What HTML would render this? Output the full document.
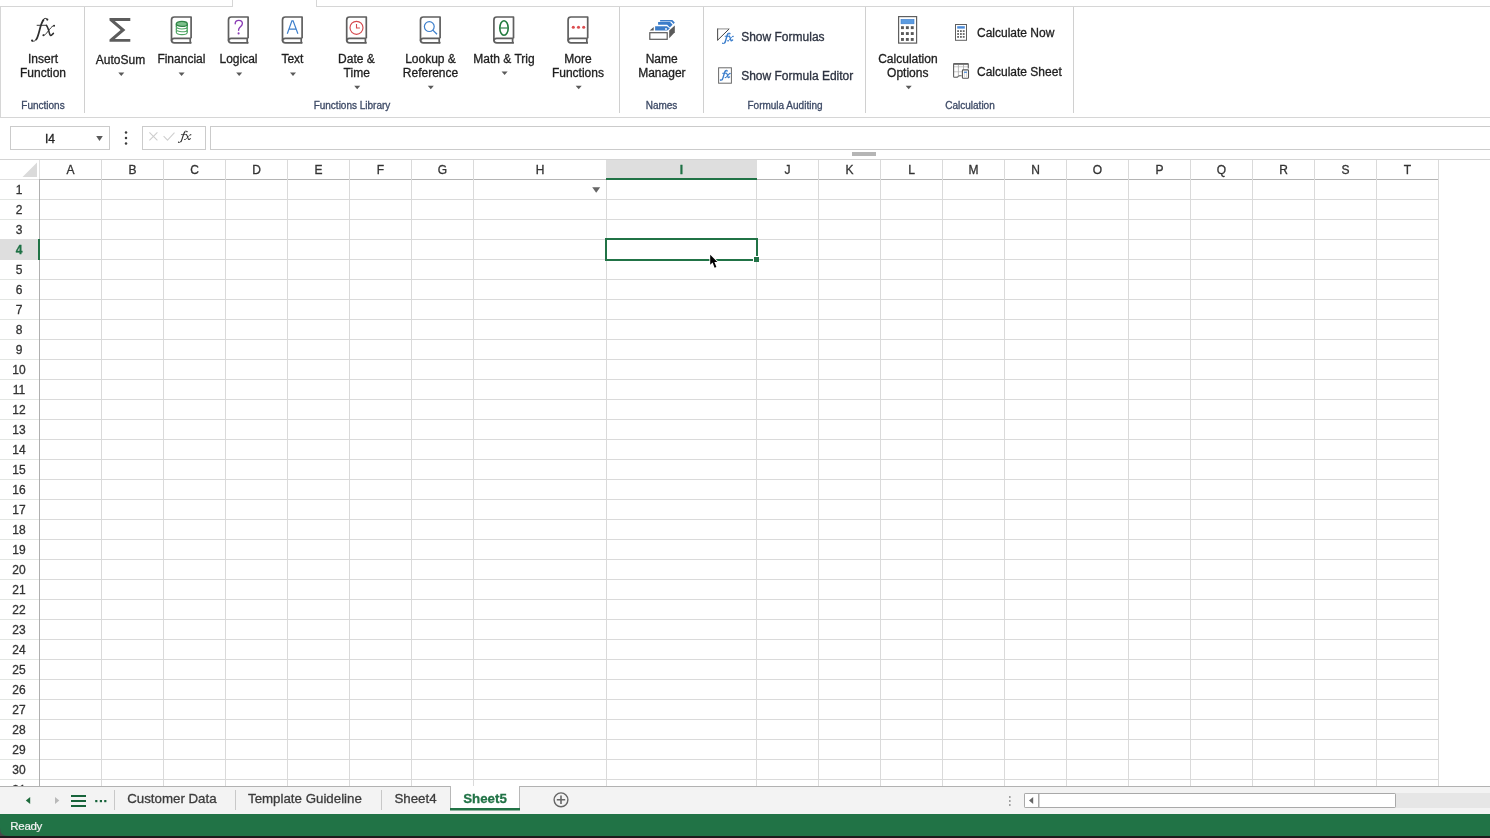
<!DOCTYPE html>
<html><head><meta charset="utf-8"><title>Excel</title>
<style>
html,body{margin:0;padding:0;width:1490px;height:838px;overflow:hidden;background:#fff;}
svg{display:block;font-family:"Liberation Sans",sans-serif;will-change:transform;}
</style></head><body>
<svg width="1490" height="838" viewBox="0 0 1490 838">
<rect x="0" y="0" width="1490" height="838" fill="#ffffff" />
<rect x="0" y="6" width="233" height="1" fill="#d6d6d6" />
<rect x="316" y="6" width="1174" height="1" fill="#d6d6d6" />
<rect x="232" y="0" width="1" height="7" fill="#d6d6d6" />
<rect x="316" y="0" width="1" height="7" fill="#d6d6d6" />
<rect x="0" y="6" width="1" height="112" fill="#d6d6d6" />
<rect x="0" y="117" width="1490" height="1" fill="#d6d6d6" />
<rect x="84" y="7" width="1" height="106" fill="#d0d0d0" />
<rect x="619" y="7" width="1" height="106" fill="#d0d0d0" />
<rect x="703" y="7" width="1" height="106" fill="#d0d0d0" />
<rect x="865" y="7" width="1" height="106" fill="#d0d0d0" />
<rect x="1073" y="7" width="1" height="106" fill="#d0d0d0" />
<text x="43" y="108.7" font-size="10" fill="#3d4a66" text-anchor="middle" font-weight="normal" stroke="#3d4a66" stroke-width="0.3" >Functions</text>
<text x="352" y="108.7" font-size="10" fill="#3d4a66" text-anchor="middle" font-weight="normal" stroke="#3d4a66" stroke-width="0.3" >Functions Library</text>
<text x="661.5" y="108.7" font-size="10" fill="#3d4a66" text-anchor="middle" font-weight="normal" stroke="#3d4a66" stroke-width="0.3" >Names</text>
<text x="785" y="108.7" font-size="10" fill="#3d4a66" text-anchor="middle" font-weight="normal" stroke="#3d4a66" stroke-width="0.3" >Formula Auditing</text>
<text x="970" y="108.9" font-size="10" fill="#3d4a66" text-anchor="middle" font-weight="normal" stroke="#3d4a66" stroke-width="0.3" >Calculation</text>
<g transform="translate(31,18) scale(1.0,1.0)" fill="none" stroke="#2e2e2e" stroke-linecap="round"><path d="M12.6,1.9 C10.6,4.2 9.6,8 8.6,12 C7.6,16 6.8,19.4 5.2,21.6" stroke-width="1.70"/><path d="M16.4,1.4 C15.8,0.3 14.2,0 13,0.8 C12.3,1.3 12,1.8 11.6,2.6 M5.6,21 C4.5,22.8 3,23.6 1.5,23.2 M6.1,7.3 H14.9" stroke-width="0.95"/><path d="M15.4,7.4 C16.8,8.8 17.5,12 18.5,15.5 C19,17.4 19.8,18 21,16.8 L22.4,15.4" stroke-width="1.53"/><path d="M23.3,7.5 C21.8,7.6 20.3,9 18.5,11.5 L15,15.8 C14.2,16.8 13.4,17.3 12.4,17.2" stroke-width="0.95"/><circle cx="16.3" cy="1.6" r="1.10" fill="#2e2e2e" stroke="none"/><circle cx="1.1" cy="22.6" r="1.10" fill="#2e2e2e" stroke="none"/><circle cx="23.1" cy="7.7" r="0.99" fill="#2e2e2e" stroke="none"/><circle cx="12.4" cy="17.2" r="0.99" fill="#2e2e2e" stroke="none"/></g>
<text x="43" y="62.6" font-size="12" fill="#1e1e1e" text-anchor="middle" font-weight="normal" stroke="#1e1e1e" stroke-width="0.3" >Insert</text>
<text x="43" y="76.6" font-size="12" fill="#1e1e1e" text-anchor="middle" font-weight="normal" stroke="#1e1e1e" stroke-width="0.3" >Function</text>
<path d="M109.5,18.1 H130.3 V21 H114.8 L125.4,30 L114.8,39 H130.3 V41.8 H109.5 V39.6 L120.6,30 L109.5,20.4 Z" fill="#5c5c5c"/>
<text x="120.5" y="63.5" font-size="12" fill="#1e1e1e" text-anchor="middle" font-weight="normal" stroke="#1e1e1e" stroke-width="0.3" >AutoSum</text>
<path d="M118.3,72.5 L124.3,72.5 L121.3,76.0 Z" fill="#5a5a5a"/>
<g transform="translate(170.6,16.0)" fill="none" stroke="#5f5f5f" stroke-width="1.7" stroke-linejoin="round"><path d="M20.5,22.3 V1 H3.8 Q0.9,1 0.9,3.9 V24 Q0.9,26.9 3.8,26.9 H20.7"/><path d="M0.9,24.8 Q0.9,22.3 3.6,22.3 H20.5"/><path d="M19.6,22.3 V25.6 Q19.6,26.6 20.7,26.9"/></g>
<g transform="translate(176,21)"><ellipse cx="5.8" cy="11.2" rx="5.5" ry="2.4" fill="#ffffff" stroke="#4ea463" stroke-width="1.05"/><path d="M0.3,8.4 V11.2 M11.3,8.4 V11.2" stroke="#4ea463" stroke-width="1.05"/><ellipse cx="5.8" cy="8.4" rx="5.5" ry="2.4" fill="#ffffff" stroke="#4ea463" stroke-width="1.05"/><path d="M0.3,5.6 V8.4 M11.3,5.6 V8.4" stroke="#4ea463" stroke-width="1.05"/><ellipse cx="5.8" cy="5.6" rx="5.5" ry="2.4" fill="#ffffff" stroke="#4ea463" stroke-width="1.05"/><path d="M0.3,2.8 V5.6 M11.3,2.8 V5.6" stroke="#3a9150" stroke-width="1.2"/><ellipse cx="5.8" cy="2.9" rx="5.5" ry="2.5" fill="#7cc08b" stroke="#2f8446" stroke-width="1.3"/></g>
<text x="181.4" y="62.6" font-size="12" fill="#1e1e1e" text-anchor="middle" font-weight="normal" stroke="#1e1e1e" stroke-width="0.3" >Financial</text>
<path d="M178.6,72.5 L184.6,72.5 L181.6,76.0 Z" fill="#5a5a5a"/>
<g transform="translate(227.6,16.0)" fill="none" stroke="#5f5f5f" stroke-width="1.7" stroke-linejoin="round"><path d="M20.5,22.3 V1 H3.8 Q0.9,1 0.9,3.9 V24 Q0.9,26.9 3.8,26.9 H20.7"/><path d="M0.9,24.8 Q0.9,22.3 3.6,22.3 H20.5"/><path d="M19.6,22.3 V25.6 Q19.6,26.6 20.7,26.9"/></g>
<path d="M235.2,23.8 C235.2,21.5 236.8,20.4 238.8,20.4 C241,20.4 242.4,21.7 242.4,23.6 C242.4,25.5 240.9,26.4 239.7,27.5 C238.9,28.3 238.6,29 238.6,30.2" fill="none" stroke="#8a3cb5" stroke-width="1.35" stroke-linecap="round"/><circle cx="238.6" cy="33.4" r="1.05" fill="#8a3cb5"/>
<text x="238.5" y="62.6" font-size="12" fill="#1e1e1e" text-anchor="middle" font-weight="normal" stroke="#1e1e1e" stroke-width="0.3" >Logical</text>
<path d="M236.2,72.5 L242.2,72.5 L239.2,76.0 Z" fill="#5a5a5a"/>
<g transform="translate(281.6,16.0)" fill="none" stroke="#5f5f5f" stroke-width="1.7" stroke-linejoin="round"><path d="M20.5,22.3 V1 H3.8 Q0.9,1 0.9,3.9 V24 Q0.9,26.9 3.8,26.9 H20.7"/><path d="M0.9,24.8 Q0.9,22.3 3.6,22.3 H20.5"/><path d="M19.6,22.3 V25.6 Q19.6,26.6 20.7,26.9"/></g>
<path d="M287.3,33.8 L291.9,20.8 H293.1 L297.9,33.8 M289.4,29.2 H295.8" fill="none" stroke="#3d7fcc" stroke-width="1.2"/>
<text x="292.4" y="62.6" font-size="12" fill="#1e1e1e" text-anchor="middle" font-weight="normal" stroke="#1e1e1e" stroke-width="0.3" >Text</text>
<path d="M290,72.5 L296,72.5 L293,76.0 Z" fill="#5a5a5a"/>
<g transform="translate(345.8,16.0)" fill="none" stroke="#5f5f5f" stroke-width="1.7" stroke-linejoin="round"><path d="M20.5,22.3 V1 H3.8 Q0.9,1 0.9,3.9 V24 Q0.9,26.9 3.8,26.9 H20.7"/><path d="M0.9,24.8 Q0.9,22.3 3.6,22.3 H20.5"/><path d="M19.6,22.3 V25.6 Q19.6,26.6 20.7,26.9"/></g>
<circle cx="356.5" cy="27.8" r="6.5" fill="none" stroke="#d64a4f" stroke-width="1.15"/><path d="M356.5,24 V28 H359.9" fill="none" stroke="#d64a4f" stroke-width="1.1"/>
<text x="356.4" y="62.6" font-size="12" fill="#1e1e1e" text-anchor="middle" font-weight="normal" stroke="#1e1e1e" stroke-width="0.3" >Date &amp;</text>
<text x="356.7" y="76.6" font-size="12" fill="#1e1e1e" text-anchor="middle" font-weight="normal" stroke="#1e1e1e" stroke-width="0.3" >Time</text>
<path d="M354.2,85.7 L360.2,85.7 L357.2,89.2 Z" fill="#5a5a5a"/>
<g transform="translate(419.6,16.0)" fill="none" stroke="#5f5f5f" stroke-width="1.7" stroke-linejoin="round"><path d="M20.5,22.3 V1 H3.8 Q0.9,1 0.9,3.9 V24 Q0.9,26.9 3.8,26.9 H20.7"/><path d="M0.9,24.8 Q0.9,22.3 3.6,22.3 H20.5"/><path d="M19.6,22.3 V25.6 Q19.6,26.6 20.7,26.9"/></g>
<circle cx="429.3" cy="26.6" r="4.9" fill="none" stroke="#3d7fcc" stroke-width="1.2"/><path d="M432.8,30.1 L437,34.3" fill="none" stroke="#3d7fcc" stroke-width="1.3"/>
<text x="430.5" y="62.6" font-size="12" fill="#1e1e1e" text-anchor="middle" font-weight="normal" stroke="#1e1e1e" stroke-width="0.3" >Lookup &amp;</text>
<text x="430.5" y="76.6" font-size="12" fill="#1e1e1e" text-anchor="middle" font-weight="normal" stroke="#1e1e1e" stroke-width="0.3" >Reference</text>
<path d="M427.8,85.7 L433.8,85.7 L430.8,89.2 Z" fill="#5a5a5a"/>
<g transform="translate(493,16.0)" fill="none" stroke="#5f5f5f" stroke-width="1.7" stroke-linejoin="round"><path d="M20.5,22.3 V1 H3.8 Q0.9,1 0.9,3.9 V24 Q0.9,26.9 3.8,26.9 H20.7"/><path d="M0.9,24.8 Q0.9,22.3 3.6,22.3 H20.5"/><path d="M19.6,22.3 V25.6 Q19.6,26.6 20.7,26.9"/></g>
<ellipse cx="504" cy="28" rx="4.2" ry="7.3" fill="none" stroke="#1f7a3c" stroke-width="1.6"/><path d="M500.2,28 H507.8" stroke="#1f7a3c" stroke-width="1.1"/>
<text x="504" y="62.6" font-size="12" fill="#1e1e1e" text-anchor="middle" font-weight="normal" stroke="#1e1e1e" stroke-width="0.3" >Math &amp; Trig</text>
<path d="M501.6,71.4 L507.6,71.4 L504.6,74.9 Z" fill="#5a5a5a"/>
<g transform="translate(567.2,16.0)" fill="none" stroke="#5f5f5f" stroke-width="1.7" stroke-linejoin="round"><path d="M20.5,22.3 V1 H3.8 Q0.9,1 0.9,3.9 V24 Q0.9,26.9 3.8,26.9 H20.7"/><path d="M0.9,24.8 Q0.9,22.3 3.6,22.3 H20.5"/><path d="M19.6,22.3 V25.6 Q19.6,26.6 20.7,26.9"/></g>
<circle cx="573.3" cy="27.3" r="1.55" fill="#dc4d50"/>
<circle cx="578.5" cy="27.3" r="1.55" fill="#dc4d50"/>
<circle cx="583.7" cy="27.3" r="1.55" fill="#dc4d50"/>
<text x="577.9" y="62.6" font-size="12" fill="#1e1e1e" text-anchor="middle" font-weight="normal" stroke="#1e1e1e" stroke-width="0.3" >More</text>
<text x="577.9" y="76.6" font-size="12" fill="#1e1e1e" text-anchor="middle" font-weight="normal" stroke="#1e1e1e" stroke-width="0.3" >Functions</text>
<path d="M575.7,85.7 L581.7,85.7 L578.7,89.2 Z" fill="#5a5a5a"/>
<g transform="translate(644,14)"><path d="M16.1,5.9 H28.3 L30.8,8.6 L29.6,9.9 L27.3,7.4 H16.1 Z" fill="#3a7cc9"/><path d="M14.1,8 H26.1 L28.6,10.7 L25.8,13.6 L23.2,10.8 H14.1 Z" fill="#3a7cc9"/><path d="M11.1,12.2 H22.9 L25.8,14.4 L23.3,16.6 H11.1 Z" fill="#3a7cc9"/><circle cx="22" cy="15" r="0.9" fill="#ffffff"/><path d="M5.7,16.6 L9.7,13.1 V16.6 Z" fill="#5a5a5a"/><path d="M25.2,16.5 L30.8,11.5 V18.3 L25.2,24.3 Z" fill="#5a5a5a"/><rect x="5.8" y="18.7" width="17.4" height="6.6" fill="#ffffff" stroke="#5a5a5a" stroke-width="1.2"/></g>
<text x="661.7" y="62.6" font-size="12" fill="#1e1e1e" text-anchor="middle" font-weight="normal" stroke="#1e1e1e" stroke-width="0.3" >Name</text>
<text x="661.9" y="76.6" font-size="12" fill="#1e1e1e" text-anchor="middle" font-weight="normal" stroke="#1e1e1e" stroke-width="0.3" >Manager</text>
<path d="M729.2,28.9 H717.6" fill="none" stroke="#999" stroke-width="1.1"/><path d="M717.6,28.5 V40.4" fill="none" stroke="#555" stroke-width="1.1"/><path d="M729.2,28.9 L717.6,40.2" fill="none" stroke="#444" stroke-width="1"/>
<g transform="translate(722.3,32.9) scale(0.46,0.46)" fill="none" stroke="#3d7fcc" stroke-linecap="round"><path d="M12.6,1.9 C10.6,4.2 9.6,8 8.6,12 C7.6,16 6.8,19.4 5.2,21.6" stroke-width="3.26"/><path d="M16.4,1.4 C15.8,0.3 14.2,0 13,0.8 C12.3,1.3 12,1.8 11.6,2.6 M5.6,21 C4.5,22.8 3,23.6 1.5,23.2 M6.1,7.3 H14.9" stroke-width="2.17"/><path d="M15.4,7.4 C16.8,8.8 17.5,12 18.5,15.5 C19,17.4 19.8,18 21,16.8 L22.4,15.4" stroke-width="2.93"/><path d="M23.3,7.5 C21.8,7.6 20.3,9 18.5,11.5 L15,15.8 C14.2,16.8 13.4,17.3 12.4,17.2" stroke-width="2.17"/><circle cx="16.3" cy="1.6" r="1.74" fill="#3d7fcc" stroke="none"/><circle cx="1.1" cy="22.6" r="1.74" fill="#3d7fcc" stroke="none"/><circle cx="23.1" cy="7.7" r="1.57" fill="#3d7fcc" stroke="none"/><circle cx="12.4" cy="17.2" r="1.57" fill="#3d7fcc" stroke="none"/></g>
<text x="741.2" y="40.6" font-size="12" fill="#2c3240" text-anchor="start" font-weight="normal" stroke="#2c3240" stroke-width="0.3" >Show Formulas</text>
<rect x="718.6" y="67.8" width="12.8" height="15.4" fill="#fff" stroke="#6a6a6a" stroke-width="1"/>
<g transform="translate(720.0,70.2) scale(0.43,0.43)" fill="none" stroke="#3d7fcc" stroke-linecap="round"><path d="M12.6,1.9 C10.6,4.2 9.6,8 8.6,12 C7.6,16 6.8,19.4 5.2,21.6" stroke-width="3.26"/><path d="M16.4,1.4 C15.8,0.3 14.2,0 13,0.8 C12.3,1.3 12,1.8 11.6,2.6 M5.6,21 C4.5,22.8 3,23.6 1.5,23.2 M6.1,7.3 H14.9" stroke-width="2.33"/><path d="M15.4,7.4 C16.8,8.8 17.5,12 18.5,15.5 C19,17.4 19.8,18 21,16.8 L22.4,15.4" stroke-width="2.93"/><path d="M23.3,7.5 C21.8,7.6 20.3,9 18.5,11.5 L15,15.8 C14.2,16.8 13.4,17.3 12.4,17.2" stroke-width="2.33"/><circle cx="16.3" cy="1.6" r="1.74" fill="#3d7fcc" stroke="none"/><circle cx="1.1" cy="22.6" r="1.74" fill="#3d7fcc" stroke="none"/><circle cx="23.1" cy="7.7" r="1.57" fill="#3d7fcc" stroke="none"/><circle cx="12.4" cy="17.2" r="1.57" fill="#3d7fcc" stroke="none"/></g>
<text x="741.2" y="79.5" font-size="12" fill="#2c3240" text-anchor="start" font-weight="normal" stroke="#2c3240" stroke-width="0.3" >Show Formula Editor</text>
<rect x="898.6" y="16.6" width="18" height="26.5" fill="#fff" stroke="#5f5f5f" stroke-width="1.2"/>
<rect x="901" y="19.4" width="13" height="4.4" fill="#5b9be0" stroke="#3d7fcc" stroke-width="0.6"/>
<rect x="901.0" y="26.2" width="2.9" height="2.9" fill="#5a5a5a"/>
<rect x="905.9" y="26.2" width="2.9" height="2.9" fill="#5a5a5a"/>
<rect x="910.8" y="26.2" width="2.9" height="2.9" fill="#5a5a5a"/>
<rect x="901.0" y="32.1" width="2.9" height="2.9" fill="#5a5a5a"/>
<rect x="905.9" y="32.1" width="2.9" height="2.9" fill="#5a5a5a"/>
<rect x="910.8" y="32.1" width="2.9" height="2.9" fill="#5a5a5a"/>
<rect x="901.0" y="38.0" width="2.9" height="2.9" fill="#5a5a5a"/>
<rect x="905.9" y="38.0" width="2.9" height="2.9" fill="#5a5a5a"/>
<rect x="910.8" y="38.0" width="2.9" height="2.9" fill="#5a5a5a"/>
<text x="907.9" y="62.9" font-size="12" fill="#1e1e1e" text-anchor="middle" font-weight="normal" stroke="#1e1e1e" stroke-width="0.3" >Calculation</text>
<text x="907.8" y="76.6" font-size="12" fill="#1e1e1e" text-anchor="middle" font-weight="normal" stroke="#1e1e1e" stroke-width="0.3" >Options</text>
<path d="M905.7,85.8 L911.7,85.8 L908.7,89.3 Z" fill="#5a5a5a"/>
<rect x="955.5" y="24.5" width="11" height="15.8" fill="#fff" stroke="#5f5f5f" stroke-width="1"/>
<rect x="957.2" y="26.2" width="7.6" height="2.4" fill="#4a8ad8"/>
<rect x="957.2" y="30.2" width="1.8" height="1.8" fill="#666"/>
<rect x="960.0" y="30.2" width="1.8" height="1.8" fill="#666"/>
<rect x="962.8" y="30.2" width="1.8" height="1.8" fill="#666"/>
<rect x="957.2" y="33.1" width="1.8" height="1.8" fill="#666"/>
<rect x="960.0" y="33.1" width="1.8" height="1.8" fill="#666"/>
<rect x="962.8" y="33.1" width="1.8" height="1.8" fill="#666"/>
<rect x="957.2" y="36.0" width="1.8" height="1.8" fill="#666"/>
<rect x="960.0" y="36.0" width="1.8" height="1.8" fill="#666"/>
<rect x="962.8" y="36.0" width="1.8" height="1.8" fill="#666"/>
<text x="977" y="37.2" font-size="12" fill="#1e1e1e" text-anchor="start" font-weight="normal" stroke="#1e1e1e" stroke-width="0.3" >Calculate Now</text>
<g><rect x="954" y="66.2" width="14" height="1.1" fill="#d0d0d0"/><rect x="954" y="71.2" width="8" height="1.1" fill="#d0d0d0"/><path d="M958.4,64.5 V76.5 M963.5,64.5 V69.5" stroke="#a8a8a8" stroke-width="0.8"/><path d="M968.3,68.6 V64.2 Q968.3,63.6 967.6,63.6 H954.2 Q953.6,63.6 953.6,64.2 V76.6 Q953.6,77.3 954.3,77.3 H957.2 L959.3,75.7 H961.6" fill="none" stroke="#5f5f5f" stroke-width="1.1"/><rect x="953.6" y="63.6" width="14.7" height="1.2" fill="#6a6a6a"/><path d="M954.2,76.6 H957.2 L958.6,75.6 V76.9 Z" fill="#9a9a9a"/><rect x="962.4" y="69.9" width="6.1" height="8.3" rx="0.8" fill="#fff" stroke="#555" stroke-width="1.1"/><path d="M964.4,71.5 V77.2 M966.5,71.5 V77.2" stroke="#c8c8c8" stroke-width="0.7"/><rect x="964.1" y="71.6" width="2.8" height="1.3" fill="#4a8ad8"/></g>
<text x="977" y="76" font-size="12" fill="#1e1e1e" text-anchor="start" font-weight="normal" stroke="#1e1e1e" stroke-width="0.3" >Calculate Sheet</text>
<rect x="10.5" y="126.5" width="99" height="23" fill="#fff" stroke="#cbcbcb" stroke-width="1"/>
<text x="45.0" y="142.8" font-size="12" fill="#222" text-anchor="start" font-weight="normal" stroke="#222" stroke-width="0.3" >I</text>
<text x="48.2" y="142.8" font-size="12" fill="#222" text-anchor="start" font-weight="normal" stroke="#222" stroke-width="0.3" >4</text>
<path d="M96.2,136 H102.8 L99.5,140.9 Z" fill="#5a5a5a"/>
<circle cx="126" cy="132.6" r="1.25" fill="#3c3c3c"/>
<circle cx="126" cy="138" r="1.25" fill="#3c3c3c"/>
<circle cx="126" cy="143.4" r="1.25" fill="#3c3c3c"/>
<rect x="142.5" y="126.5" width="63" height="23" fill="#fff" stroke="#cbcbcb" stroke-width="1"/>
<path d="M149.4,132.4 L157.4,140.4 M157.4,132.4 L149.4,140.4" stroke="#cdcdcd" stroke-width="1.05"/>
<path d="M163.6,136.2 L167.5,140.2 L174.5,132.6" fill="none" stroke="#d0d0d0" stroke-width="1.1"/>
<g transform="translate(178,130.9) scale(0.55,0.5)" fill="none" stroke="#2e2e2e" stroke-linecap="round"><path d="M12.6,1.9 C10.6,4.2 9.6,8 8.6,12 C7.6,16 6.8,19.4 5.2,21.6" stroke-width="2.09"/><path d="M16.4,1.4 C15.8,0.3 14.2,0 13,0.8 C12.3,1.3 12,1.8 11.6,2.6 M5.6,21 C4.5,22.8 3,23.6 1.5,23.2 M6.1,7.3 H14.9" stroke-width="1.36"/><path d="M15.4,7.4 C16.8,8.8 17.5,12 18.5,15.5 C19,17.4 19.8,18 21,16.8 L22.4,15.4" stroke-width="1.88"/><path d="M23.3,7.5 C21.8,7.6 20.3,9 18.5,11.5 L15,15.8 C14.2,16.8 13.4,17.3 12.4,17.2" stroke-width="1.36"/><circle cx="16.3" cy="1.6" r="1.27" fill="#2e2e2e" stroke="none"/><circle cx="1.1" cy="22.6" r="1.27" fill="#2e2e2e" stroke="none"/><circle cx="23.1" cy="7.7" r="1.15" fill="#2e2e2e" stroke="none"/><circle cx="12.4" cy="17.2" r="1.15" fill="#2e2e2e" stroke="none"/></g>
<rect x="210.5" y="126.5" width="1290" height="23" fill="#fff" stroke="#cbcbcb" stroke-width="1"/>
<rect x="852" y="152" width="24" height="4" fill="#b5b5b5" />
<rect x="0" y="159" width="1490" height="1" fill="#d4d4d4" />
<path d="M37,162.5 V177 H22.5 Z" fill="#dadada"/>
<rect x="0" y="199" width="39" height="1" fill="#e3e6e3" />
<rect x="40" y="199" width="1398" height="1" fill="#dadada" />
<rect x="0" y="219" width="39" height="1" fill="#e3e6e3" />
<rect x="40" y="219" width="1398" height="1" fill="#dadada" />
<rect x="0" y="239" width="39" height="1" fill="#e3e6e3" />
<rect x="40" y="239" width="1398" height="1" fill="#dadada" />
<rect x="0" y="259" width="39" height="1" fill="#e3e6e3" />
<rect x="40" y="259" width="1398" height="1" fill="#dadada" />
<rect x="0" y="279" width="39" height="1" fill="#e3e6e3" />
<rect x="40" y="279" width="1398" height="1" fill="#dadada" />
<rect x="0" y="299" width="39" height="1" fill="#e3e6e3" />
<rect x="40" y="299" width="1398" height="1" fill="#dadada" />
<rect x="0" y="319" width="39" height="1" fill="#e3e6e3" />
<rect x="40" y="319" width="1398" height="1" fill="#dadada" />
<rect x="0" y="339" width="39" height="1" fill="#e3e6e3" />
<rect x="40" y="339" width="1398" height="1" fill="#dadada" />
<rect x="0" y="359" width="39" height="1" fill="#e3e6e3" />
<rect x="40" y="359" width="1398" height="1" fill="#dadada" />
<rect x="0" y="379" width="39" height="1" fill="#e3e6e3" />
<rect x="40" y="379" width="1398" height="1" fill="#dadada" />
<rect x="0" y="399" width="39" height="1" fill="#e3e6e3" />
<rect x="40" y="399" width="1398" height="1" fill="#dadada" />
<rect x="0" y="419" width="39" height="1" fill="#e3e6e3" />
<rect x="40" y="419" width="1398" height="1" fill="#dadada" />
<rect x="0" y="439" width="39" height="1" fill="#e3e6e3" />
<rect x="40" y="439" width="1398" height="1" fill="#dadada" />
<rect x="0" y="459" width="39" height="1" fill="#e3e6e3" />
<rect x="40" y="459" width="1398" height="1" fill="#dadada" />
<rect x="0" y="479" width="39" height="1" fill="#e3e6e3" />
<rect x="40" y="479" width="1398" height="1" fill="#dadada" />
<rect x="0" y="499" width="39" height="1" fill="#e3e6e3" />
<rect x="40" y="499" width="1398" height="1" fill="#dadada" />
<rect x="0" y="519" width="39" height="1" fill="#e3e6e3" />
<rect x="40" y="519" width="1398" height="1" fill="#dadada" />
<rect x="0" y="539" width="39" height="1" fill="#e3e6e3" />
<rect x="40" y="539" width="1398" height="1" fill="#dadada" />
<rect x="0" y="559" width="39" height="1" fill="#e3e6e3" />
<rect x="40" y="559" width="1398" height="1" fill="#dadada" />
<rect x="0" y="579" width="39" height="1" fill="#e3e6e3" />
<rect x="40" y="579" width="1398" height="1" fill="#dadada" />
<rect x="0" y="599" width="39" height="1" fill="#e3e6e3" />
<rect x="40" y="599" width="1398" height="1" fill="#dadada" />
<rect x="0" y="619" width="39" height="1" fill="#e3e6e3" />
<rect x="40" y="619" width="1398" height="1" fill="#dadada" />
<rect x="0" y="639" width="39" height="1" fill="#e3e6e3" />
<rect x="40" y="639" width="1398" height="1" fill="#dadada" />
<rect x="0" y="659" width="39" height="1" fill="#e3e6e3" />
<rect x="40" y="659" width="1398" height="1" fill="#dadada" />
<rect x="0" y="679" width="39" height="1" fill="#e3e6e3" />
<rect x="40" y="679" width="1398" height="1" fill="#dadada" />
<rect x="0" y="699" width="39" height="1" fill="#e3e6e3" />
<rect x="40" y="699" width="1398" height="1" fill="#dadada" />
<rect x="0" y="719" width="39" height="1" fill="#e3e6e3" />
<rect x="40" y="719" width="1398" height="1" fill="#dadada" />
<rect x="0" y="739" width="39" height="1" fill="#e3e6e3" />
<rect x="40" y="739" width="1398" height="1" fill="#dadada" />
<rect x="0" y="759" width="39" height="1" fill="#e3e6e3" />
<rect x="40" y="759" width="1398" height="1" fill="#dadada" />
<rect x="0" y="779" width="39" height="1" fill="#e3e6e3" />
<rect x="40" y="779" width="1398" height="1" fill="#dadada" />
<rect x="0" y="179" width="39" height="1" fill="#e0e0e0" />
<rect x="39" y="179" width="1399" height="1" fill="#b4b4b4" />
<rect x="39" y="160" width="1" height="19" fill="#e0e0e0" />
<rect x="39" y="180" width="1" height="606" fill="#b0b0b0" />
<rect x="101" y="160" width="1" height="626" fill="#dadada" />
<rect x="163" y="160" width="1" height="626" fill="#dadada" />
<rect x="225" y="160" width="1" height="626" fill="#dadada" />
<rect x="287" y="160" width="1" height="626" fill="#dadada" />
<rect x="349" y="160" width="1" height="626" fill="#dadada" />
<rect x="411" y="160" width="1" height="626" fill="#dadada" />
<rect x="473" y="160" width="1" height="626" fill="#dadada" />
<rect x="606" y="160" width="1" height="626" fill="#dadada" />
<rect x="756" y="160" width="1" height="626" fill="#dadada" />
<rect x="818" y="160" width="1" height="626" fill="#dadada" />
<rect x="880" y="160" width="1" height="626" fill="#dadada" />
<rect x="942" y="160" width="1" height="626" fill="#dadada" />
<rect x="1004" y="160" width="1" height="626" fill="#dadada" />
<rect x="1066" y="160" width="1" height="626" fill="#dadada" />
<rect x="1128" y="160" width="1" height="626" fill="#dadada" />
<rect x="1190" y="160" width="1" height="626" fill="#dadada" />
<rect x="1252" y="160" width="1" height="626" fill="#dadada" />
<rect x="1314" y="160" width="1" height="626" fill="#dadada" />
<rect x="1376" y="160" width="1" height="626" fill="#dadada" />
<rect x="1438" y="160" width="1" height="626" fill="#dadada" />
<rect x="606" y="160" width="151" height="18" fill="#dedede" />
<rect x="606" y="178" width="151" height="2" fill="#217346" />
<rect x="0" y="239" width="38" height="21" fill="#dedede" />
<text x="70.5" y="174.2" font-size="12" fill="#333" text-anchor="middle" font-weight="normal" stroke="#333" stroke-width="0.3" >A</text>
<text x="132.5" y="174.2" font-size="12" fill="#333" text-anchor="middle" font-weight="normal" stroke="#333" stroke-width="0.3" >B</text>
<text x="194.5" y="174.2" font-size="12" fill="#333" text-anchor="middle" font-weight="normal" stroke="#333" stroke-width="0.3" >C</text>
<text x="256.5" y="174.2" font-size="12" fill="#333" text-anchor="middle" font-weight="normal" stroke="#333" stroke-width="0.3" >D</text>
<text x="318.5" y="174.2" font-size="12" fill="#333" text-anchor="middle" font-weight="normal" stroke="#333" stroke-width="0.3" >E</text>
<text x="380.5" y="174.2" font-size="12" fill="#333" text-anchor="middle" font-weight="normal" stroke="#333" stroke-width="0.3" >F</text>
<text x="442.5" y="174.2" font-size="12" fill="#333" text-anchor="middle" font-weight="normal" stroke="#333" stroke-width="0.3" >G</text>
<text x="540.0" y="174.2" font-size="12" fill="#333" text-anchor="middle" font-weight="normal" stroke="#333" stroke-width="0.3" >H</text>
<text x="681.5" y="174.2" font-size="12" fill="#1e7145" text-anchor="middle" font-weight="bold" stroke="#1e7145" stroke-width="0.3" >I</text>
<text x="787.5" y="174.2" font-size="12" fill="#333" text-anchor="middle" font-weight="normal" stroke="#333" stroke-width="0.3" >J</text>
<text x="849.5" y="174.2" font-size="12" fill="#333" text-anchor="middle" font-weight="normal" stroke="#333" stroke-width="0.3" >K</text>
<text x="911.5" y="174.2" font-size="12" fill="#333" text-anchor="middle" font-weight="normal" stroke="#333" stroke-width="0.3" >L</text>
<text x="973.5" y="174.2" font-size="12" fill="#333" text-anchor="middle" font-weight="normal" stroke="#333" stroke-width="0.3" >M</text>
<text x="1035.5" y="174.2" font-size="12" fill="#333" text-anchor="middle" font-weight="normal" stroke="#333" stroke-width="0.3" >N</text>
<text x="1097.5" y="174.2" font-size="12" fill="#333" text-anchor="middle" font-weight="normal" stroke="#333" stroke-width="0.3" >O</text>
<text x="1159.5" y="174.2" font-size="12" fill="#333" text-anchor="middle" font-weight="normal" stroke="#333" stroke-width="0.3" >P</text>
<text x="1221.5" y="174.2" font-size="12" fill="#333" text-anchor="middle" font-weight="normal" stroke="#333" stroke-width="0.3" >Q</text>
<text x="1283.5" y="174.2" font-size="12" fill="#333" text-anchor="middle" font-weight="normal" stroke="#333" stroke-width="0.3" >R</text>
<text x="1345.5" y="174.2" font-size="12" fill="#333" text-anchor="middle" font-weight="normal" stroke="#333" stroke-width="0.3" >S</text>
<text x="1407.5" y="174.2" font-size="12" fill="#333" text-anchor="middle" font-weight="normal" stroke="#333" stroke-width="0.3" >T</text>
<text x="19" y="193.6" font-size="12" fill="#333" text-anchor="middle" font-weight="normal" stroke="#333" stroke-width="0.3" >1</text>
<text x="19" y="213.6" font-size="12" fill="#333" text-anchor="middle" font-weight="normal" stroke="#333" stroke-width="0.3" >2</text>
<text x="19" y="233.6" font-size="12" fill="#333" text-anchor="middle" font-weight="normal" stroke="#333" stroke-width="0.3" >3</text>
<text x="19" y="253.6" font-size="12" fill="#1e7145" text-anchor="middle" font-weight="bold" stroke="#1e7145" stroke-width="0.3" >4</text>
<text x="19" y="273.6" font-size="12" fill="#333" text-anchor="middle" font-weight="normal" stroke="#333" stroke-width="0.3" >5</text>
<text x="19" y="293.6" font-size="12" fill="#333" text-anchor="middle" font-weight="normal" stroke="#333" stroke-width="0.3" >6</text>
<text x="19" y="313.6" font-size="12" fill="#333" text-anchor="middle" font-weight="normal" stroke="#333" stroke-width="0.3" >7</text>
<text x="19" y="333.6" font-size="12" fill="#333" text-anchor="middle" font-weight="normal" stroke="#333" stroke-width="0.3" >8</text>
<text x="19" y="353.6" font-size="12" fill="#333" text-anchor="middle" font-weight="normal" stroke="#333" stroke-width="0.3" >9</text>
<text x="19" y="373.6" font-size="12" fill="#333" text-anchor="middle" font-weight="normal" stroke="#333" stroke-width="0.3" >10</text>
<text x="19" y="393.6" font-size="12" fill="#333" text-anchor="middle" font-weight="normal" stroke="#333" stroke-width="0.3" >11</text>
<text x="19" y="413.6" font-size="12" fill="#333" text-anchor="middle" font-weight="normal" stroke="#333" stroke-width="0.3" >12</text>
<text x="19" y="433.6" font-size="12" fill="#333" text-anchor="middle" font-weight="normal" stroke="#333" stroke-width="0.3" >13</text>
<text x="19" y="453.6" font-size="12" fill="#333" text-anchor="middle" font-weight="normal" stroke="#333" stroke-width="0.3" >14</text>
<text x="19" y="473.6" font-size="12" fill="#333" text-anchor="middle" font-weight="normal" stroke="#333" stroke-width="0.3" >15</text>
<text x="19" y="493.6" font-size="12" fill="#333" text-anchor="middle" font-weight="normal" stroke="#333" stroke-width="0.3" >16</text>
<text x="19" y="513.6" font-size="12" fill="#333" text-anchor="middle" font-weight="normal" stroke="#333" stroke-width="0.3" >17</text>
<text x="19" y="533.6" font-size="12" fill="#333" text-anchor="middle" font-weight="normal" stroke="#333" stroke-width="0.3" >18</text>
<text x="19" y="553.6" font-size="12" fill="#333" text-anchor="middle" font-weight="normal" stroke="#333" stroke-width="0.3" >19</text>
<text x="19" y="573.6" font-size="12" fill="#333" text-anchor="middle" font-weight="normal" stroke="#333" stroke-width="0.3" >20</text>
<text x="19" y="593.6" font-size="12" fill="#333" text-anchor="middle" font-weight="normal" stroke="#333" stroke-width="0.3" >21</text>
<text x="19" y="613.6" font-size="12" fill="#333" text-anchor="middle" font-weight="normal" stroke="#333" stroke-width="0.3" >22</text>
<text x="19" y="633.6" font-size="12" fill="#333" text-anchor="middle" font-weight="normal" stroke="#333" stroke-width="0.3" >23</text>
<text x="19" y="653.6" font-size="12" fill="#333" text-anchor="middle" font-weight="normal" stroke="#333" stroke-width="0.3" >24</text>
<text x="19" y="673.6" font-size="12" fill="#333" text-anchor="middle" font-weight="normal" stroke="#333" stroke-width="0.3" >25</text>
<text x="19" y="693.6" font-size="12" fill="#333" text-anchor="middle" font-weight="normal" stroke="#333" stroke-width="0.3" >26</text>
<text x="19" y="713.6" font-size="12" fill="#333" text-anchor="middle" font-weight="normal" stroke="#333" stroke-width="0.3" >27</text>
<text x="19" y="733.6" font-size="12" fill="#333" text-anchor="middle" font-weight="normal" stroke="#333" stroke-width="0.3" >28</text>
<text x="19" y="753.6" font-size="12" fill="#333" text-anchor="middle" font-weight="normal" stroke="#333" stroke-width="0.3" >29</text>
<text x="19" y="773.6" font-size="12" fill="#333" text-anchor="middle" font-weight="normal" stroke="#333" stroke-width="0.3" >30</text>
<text x="19" y="793.6" font-size="12" fill="#333" text-anchor="middle" font-weight="normal" stroke="#333" stroke-width="0.3" >31</text>
<rect x="38" y="239" width="2" height="21" fill="#217346" />
<path d="M592.2,187.2 H600.2 L596.2,192.8 Z" fill="#666"/>
<rect x="605" y="238" width="2" height="23" fill="#217346" />
<rect x="605" y="238" width="153" height="2" fill="#217346" />
<rect x="756" y="238" width="2" height="18" fill="#217346" />
<rect x="605" y="259" width="148" height="2" fill="#217346" />
<rect x="753" y="256" width="1" height="6" fill="#ffffff" />
<rect x="753" y="256" width="6" height="1" fill="#ffffff" />
<rect x="754" y="257" width="5" height="5" fill="#217346" />
<rect x="0" y="786" width="1490" height="28" fill="#f3f3f3" />
<rect x="0" y="786" width="1490" height="1" fill="#b2b2b2" />
<path d="M25.8,800.5 L30.2,797 V804 Z" fill="#1e6b3c"/>
<path d="M59.3,800.5 L55,797 V804 Z" fill="#b9b9b9"/>
<rect x="71" y="795" width="15" height="2" fill="#17633a" />
<rect x="71" y="800" width="15" height="2" fill="#17633a" />
<rect x="71" y="805" width="15" height="2" fill="#17633a" />
<rect x="95.2" y="800" width="2.2" height="2.2" fill="#17633a" />
<rect x="99.8" y="800" width="2.2" height="2.2" fill="#17633a" />
<rect x="104.2" y="800" width="2.2" height="2.2" fill="#17633a" />
<rect x="114" y="790" width="1" height="20" fill="#c8c8c8" />
<text x="127.2" y="803" font-size="13.3" fill="#3c3c3c" text-anchor="start" font-weight="normal" stroke="#3c3c3c" stroke-width="0.3" >Customer Data</text>
<rect x="235" y="790" width="1" height="20" fill="#c8c8c8" />
<text x="248" y="803" font-size="13.3" fill="#3c3c3c" text-anchor="start" font-weight="normal" stroke="#3c3c3c" stroke-width="0.3" >Template Guideline</text>
<rect x="381" y="790" width="1" height="20" fill="#c8c8c8" />
<text x="394.4" y="803" font-size="13.3" fill="#3c3c3c" text-anchor="start" font-weight="normal" stroke="#3c3c3c" stroke-width="0.3" >Sheet4</text>
<rect x="450" y="786" width="70" height="23" fill="#ffffff" />
<rect x="450" y="786" width="1" height="23" fill="#b8b8b8" />
<rect x="519" y="786" width="1" height="23" fill="#b8b8b8" />
<rect x="450" y="808" width="70" height="2.5" fill="#217346" />
<text x="485" y="803" font-size="13.3" fill="#217346" text-anchor="middle" font-weight="bold" stroke="#217346" stroke-width="0.3" >Sheet5</text>
<circle cx="561" cy="799.8" r="6.9" fill="none" stroke="#666" stroke-width="1.4"/><path d="M561,795.6 V804 M556.8,799.8 H565.2" stroke="#666" stroke-width="1.6"/>
<rect x="1009" y="796.2" width="1.6" height="1.6" fill="#8a8a8a" />
<rect x="1009" y="800.2" width="1.6" height="1.6" fill="#8a8a8a" />
<rect x="1009" y="804.2" width="1.6" height="1.6" fill="#8a8a8a" />
<rect x="1396" y="793" width="94" height="15" fill="#e6e6e6" />
<rect x="1024.5" y="793.5" width="371" height="14" rx="0.6" fill="#fff" stroke="#a9a9a9" stroke-width="1"/>
<rect x="1038" y="794" width="1.5" height="13" fill="#a9a9a9" />
<path d="M1029,800.5 L1033.2,797 V804 Z" fill="#666"/>
<rect x="0" y="836" width="1490" height="2" fill="#1c1c1c" />
<path d="M0,814 H1490 V836 H0 Z" fill="#217346"/>
<path d="M0,828 Q0,836 8,836 H0 Z" fill="#4a4a4a"/>
<text x="10.3" y="829.7" font-size="11.5" fill="#f2f2f2" text-anchor="start" font-weight="normal" stroke="#f2f2f2" stroke-width="0.2" letter-spacing="-0.3">Ready</text>
<path d="M710.2,254.8 V264.8 L712.6,262.5 L714.6,267.8 L716.4,267.1 L714.4,262 L717.4,261.9 Z" fill="#000" stroke="#fff" stroke-width="1.6" stroke-linejoin="round" paint-order="stroke"/>
</svg>
</body></html>
